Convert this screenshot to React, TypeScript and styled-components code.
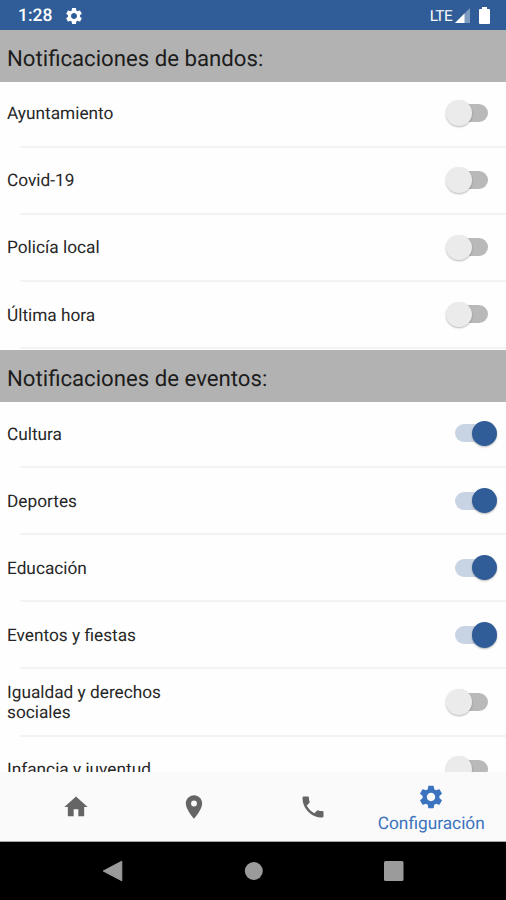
import React from 'react';
import styled, { createGlobalStyle } from 'styled-components';
import { MdSettings, MdHome, MdPlace, MdPhone } from 'react-icons/md';

const GlobalStyle = createGlobalStyle`
  *, *::before, *::after { box-sizing: border-box; }
  body {
    margin: 0;
    background: #fff;
    font-family: Roboto, sans-serif;
    text-rendering: geometricPrecision;
  }
`;

const Screen = styled.div`
  display: flex;
  flex-direction: column;
  width: 506px;
  height: 900px;
  overflow: hidden;
  background: #fefefe;
`;

const StatusBar = styled.header`
  flex: none;
  display: flex;
  align-items: center;
  height: 30px;
  padding: 1px 16px 0 18px;
  background: #305d97;
  color: #fff;
`;

const Clock = styled.span`
  width: 46px;
  padding-top: 1px;
  font-size: 17.5px;
  line-height: 20px;
  font-weight: 500;
`;

const StatusIcons = styled.div`
  display: flex;
  align-items: center;
  margin-left: auto;
`;

const Network = styled.span`
  margin-right: 3px;
  font-size: 15.3px;
  line-height: 20px;
  letter-spacing: -0.6px;
`;

const Signal = styled.svg`
  display: block;
  margin-right: 9px;
`;

const Battery = styled.svg`
  display: block;
`;

const Settings = styled.main`
  flex: none;
  height: 742px;
  overflow: hidden;
`;

const SectionTitle = styled.h2`
  display: flex;
  align-items: center;
  height: 52px;
  margin: 0 0 -1px;
  padding: 5px 7px 0;
  background: #b2b2b2;
  color: #1c1c1c;
  font-size: 22.2px;
  font-weight: 400;
`;

const List = styled.ul`
  margin: 0;
  padding: 0;
  list-style: none;
`;

const Row = styled.li`
  display: flex;
  align-items: center;
  justify-content: space-between;
  height: 67.15px;
  padding: 0 9px 3px 7px;
  background: linear-gradient(#f3f3f3, #f3f3f3) 20px calc(100% - 0.5px) / 100% 2px no-repeat;
`;

const Label = styled.span`
  width: 176px;
  padding-top: 2.2px;
  color: #272727;
  font-size: 17.25px;
  line-height: 20px;
`;

const Switch = styled.span<{ $on?: boolean }>`
  position: relative;
  display: flex;
  align-items: center;
  justify-content: ${(p) => (p.$on ? 'flex-end' : 'flex-start')};
  width: 51px;
  height: 26px;

  &::before {
    content: '';
    position: absolute;
    left: 9px;
    top: 4px;
    width: 33px;
    height: 18px;
    border-radius: 9px;
    background: ${(p) => (p.$on ? '#c8d3e3' : '#b9b9b9')};
  }
`;

const Thumb = styled.span<{ $on?: boolean }>`
  position: relative;
  width: 25.5px;
  height: 25.5px;
  border-radius: 50%;
  background: ${(p) => (p.$on ? '#305d97' : '#ebebeb')};
  box-shadow: 0 1px 2px rgba(0, 0, 0, 0.28);
`;

const TabBar = styled.nav`
  flex: none;
  display: grid;
  grid-template-columns: repeat(4, 118.5px);
  height: 70px;
  padding-left: 16.5px;
  background: #fafafa;
  border-bottom: 1px solid #a5a5a5;
`;

const Tab = styled.a<{ $active?: boolean }>`
  display: flex;
  flex-direction: column;
  align-items: center;
  padding-top: ${(p) => (p.$active ? '11px' : '21px')};
  color: ${(p) => (p.$active ? '#3b73be' : '#656565')};

  svg { flex: none; }
`;

const TabLabel = styled.span`
  margin-top: 3px;
  font-size: 17.3px;
  line-height: 20px;
`;

const SystemBar = styled.footer`
  flex: none;
  display: grid;
  grid-template-columns: repeat(3, 140.5px);
  justify-content: center;
  justify-items: center;
  align-items: center;
  height: 58px;
  background: #000;
  color: #9b9b9b;
`;

interface Channel {
  label: string;
  on?: boolean;
}

const notices: Channel[] = [
  { label: 'Ayuntamiento' },
  { label: 'Covid-19' },
  { label: 'Policía local' },
  { label: 'Última hora' },
];

const events: Channel[] = [
  { label: 'Cultura', on: true },
  { label: 'Deportes', on: true },
  { label: 'Educación', on: true },
  { label: 'Eventos y fiestas', on: true },
  { label: 'Igualdad y derechos sociales' },
  { label: 'Infancia y juventud' },
];

const Channels = ({ items }: { items: Channel[] }) => (
  <List>
    {items.map(({ label, on }) => (
      <Row key={label}>
        <Label>{label}</Label>
        <Switch role="switch" aria-checked={!!on} aria-label={label} $on={on}>
          <Thumb $on={on} />
        </Switch>
      </Row>
    ))}
  </List>
);

const NoticeBlock = styled.section`
  height: 320.4px;
`;

export default function App() {
  return (
    <>
      <GlobalStyle />
      <Screen>
        <StatusBar>
          <Clock>1:28</Clock>
          <MdSettings size={20} />
          <StatusIcons>
            <Network>LTE</Network>
            <Signal width="15" height="15" viewBox="0 0 15 15">
              <path d="M15 0V15H0Z" fill="#7d9abf" />
              <path d="M9.5 5.5V15H0Z" fill="#fff" />
            </Signal>
            <Battery width="11" height="17" viewBox="0 0 11 17">
              <path d="M3 0H8V2H10Q11 2 11 3V16Q11 17 10 17H1Q0 17 0 16V3Q0 2 1 2H3Z" fill="#fff" />
            </Battery>
          </StatusIcons>
        </StatusBar>
        <Settings>
          <NoticeBlock>
            <SectionTitle>Notificaciones de bandos:</SectionTitle>
            <Channels items={notices} />
          </NoticeBlock>
          <section>
            <SectionTitle>Notificaciones de eventos:</SectionTitle>
            <Channels items={events} />
          </section>
        </Settings>
        <TabBar>
          <Tab><MdHome size={28} /></Tab>
          <Tab><MdPlace size={28} /></Tab>
          <Tab><MdPhone size={28} /></Tab>
          <Tab $active>
            <MdSettings size={28} />
            <TabLabel>Configuración</TabLabel>
          </Tab>
        </TabBar>
        <SystemBar>
          <svg width="22" height="22" viewBox="0 0 22 22">
            <path d="M19.8 1.2V20.8L1.2 11Z" fill="currentColor" stroke="currentColor" strokeLinejoin="round" />
          </svg>
          <svg width="19" height="18" viewBox="0 0 19 18">
            <circle cx="9.8" cy="9" r="9" fill="currentColor" />
          </svg>
          <svg width="20" height="20" viewBox="0 0 20 20">
            <rect width="19.5" height="20" rx="1.5" fill="currentColor" />
          </svg>
        </SystemBar>
      </Screen>
    </>
  );
}
